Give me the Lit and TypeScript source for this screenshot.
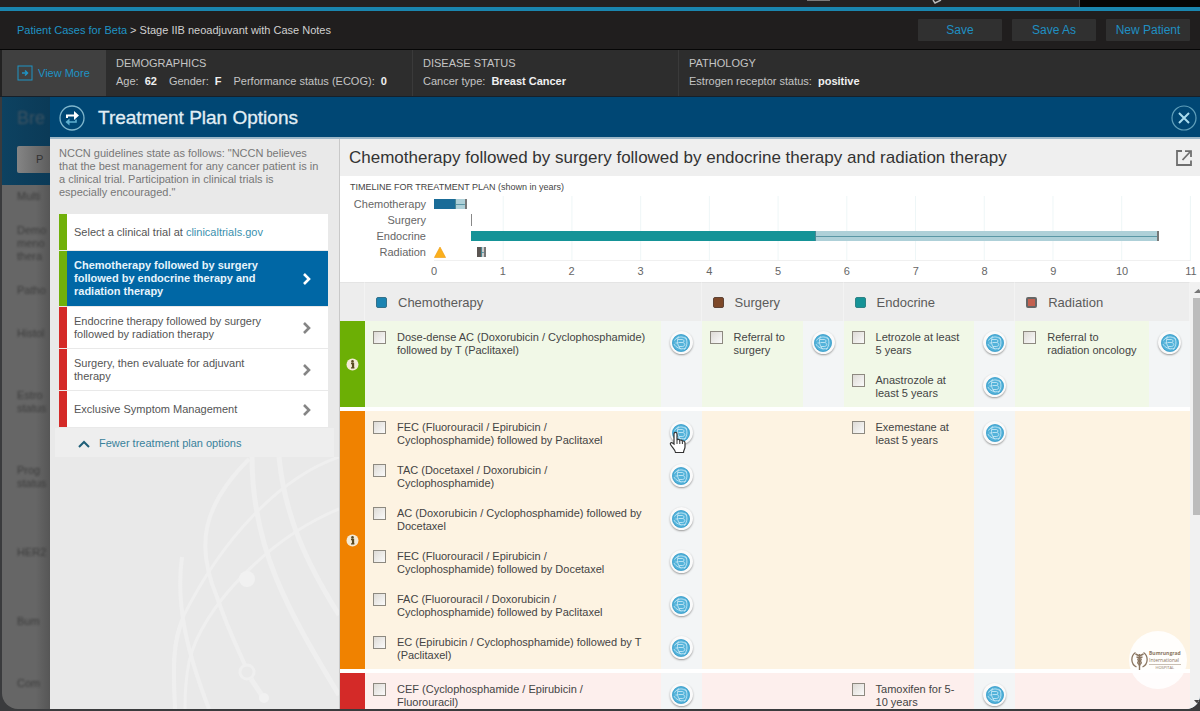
import { LitElement, html, svg, css, nothing } from "lit";
import { customElement, state } from "lit/decorators.js";
import { classMap } from "lit/directives/class-map.js";
import { styleMap } from "lit/directives/style-map.js";

type Level = "green" | "orange" | "red";

interface PlanOption {
  level: Level;
  text: string;
}

interface TimelineRow {
  name: string;
  tone: string;
  start: number;
  sure: number;
  max: number;
  warn?: boolean;
}

interface Therapy {
  name: string;
  hovered?: boolean;
}

interface Band {
  level: Level;
  cells: Therapy[][];
}

const YEARS = 11;

const OPTIONS: PlanOption[] = [
  { level: "green", text: "Chemotherapy followed by surgery followed by endocrine therapy and radiation therapy" },
  { level: "red", text: "Endocrine therapy followed by surgery followed by radiation therapy" },
  { level: "red", text: "Surgery, then evaluate for adjuvant therapy" },
  { level: "red", text: "Exclusive Symptom Management" },
];

const TIMELINE: TimelineRow[] = [
  { name: "Chemotherapy", tone: "chemo", start: 0, sure: 0.31, max: 0.48 },
  { name: "Surgery", tone: "surgery", start: 0.54, sure: 0, max: 0.54 },
  { name: "Endocrine", tone: "endocrine", start: 0.54, sure: 5.54, max: 10.55 },
  { name: "Radiation", tone: "radiation", start: 0.62, sure: 0.68, max: 0.75, warn: true },
];

const COLUMNS = [
  { name: "Chemotherapy", tone: "chemo" },
  { name: "Surgery", tone: "surgery" },
  { name: "Endocrine", tone: "endocrine" },
  { name: "Radiation", tone: "radiation" },
];

const BANDS: Band[] = [
  {
    level: "green",
    cells: [
      [{ name: "Dose-dense AC (Doxorubicin / Cyclophosphamide)\nfollowed by T (Paclitaxel)" }],
      [{ name: "Referral to\nsurgery" }],
      [{ name: "Letrozole at least\n5 years" }, { name: "Anastrozole at\nleast 5 years" }],
      [{ name: "Referral to\nradiation oncology" }],
    ],
  },
  {
    level: "orange",
    cells: [
      [
        { name: "FEC (Fluorouracil / Epirubicin /\nCyclophosphamide) followed by Paclitaxel", hovered: true },
        { name: "TAC (Docetaxel / Doxorubicin /\nCyclophosphamide)" },
        { name: "AC (Doxorubicin / Cyclophosphamide) followed by\nDocetaxel" },
        { name: "FEC (Fluorouracil / Epirubicin /\nCyclophosphamide) followed by Docetaxel" },
        { name: "FAC (Fluorouracil / Doxorubicin /\nCyclophosphamide) followed by Paclitaxel" },
        { name: "EC (Epirubicin / Cyclophosphamide) followed by T\n(Paclitaxel)" },
      ],
      [],
      [{ name: "Exemestane at\nleast 5 years" }],
      [],
    ],
  },
  {
    level: "red",
    cells: [
      [{ name: "CEF (Cyclophosphamide / Epirubicin /\nFluorouracil)" }],
      [],
      [{ name: "Tamoxifen for 5-\n10 years" }],
      [],
    ],
  },
];

const chevron = svg`<path d="M2 1 L7 6 L2 11" fill="none" stroke="currentColor" stroke-width="2.6"/>`;

@customElement("patient-header")
class PatientHeader extends LitElement {
  static styles = css`
    :host { display: block; color: #c4c4c4; font-size: 11px; }
    .strip {
      height: 7px; display: flex; background: #242222; border-bottom: 4px solid #1a86af;
    }
    .strip svg { flex: 1; height: 7px; }
    .strip .rest { width: 10%; background: #060606; border-left: 1px solid #444; }
    .crumbs {
      height: 38px; display: flex; align-items: center; padding: 0 10px 0 17px; gap: 10px;
      background: #201e1e; border-bottom: 1px solid #060606;
    }
    .trail { flex: 1; font-size: 11px; color: #d0d0d0; }
    .trail a, .more { color: #1f93c4; text-decoration: none; }
    .save {
      width: 84px; height: 22px; border: 0; padding: 0; background: #303030; color: #1f8fc2;
      font: 12px "Liberation Sans", Arial, sans-serif; border-radius: 1px;
    }
    .facts {
      display: grid; grid-template-columns: 106px 307fr 266fr 521fr; height: 46px; background: #2d2d2d;
      border-bottom: 1px solid #16202a;
    }
    .more {
      display: flex; align-items: center; gap: 5px; background: #404040; border: 0;
      border-left: 2px solid #222; padding: 0 0 0 15px; font: 11px "Liberation Sans", Arial, sans-serif;
    }
    .fact { padding: 4px 0 0 10px; line-height: 18px; border-right: 1px solid #3a3a3a; white-space: nowrap; }
    .fact:last-child { border-right: 0; }
    .fact h2 { margin: 0; font-size: 11px; font-weight: normal; }
    .pairs { display: flex; gap: 12px; }
    .pairs b { color: #f0f0f0; padding-left: 3px; }
  `;

  render() {
    return html`
      <div class="strip">
        <svg viewBox="0 0 1080 7" preserveAspectRatio="xMinYMin slice" aria-hidden="true">
          <path d="M807 0H830" stroke="#999" stroke-width="1.5" />
          <path d="M933 0L935 3L941 0" fill="none" stroke="#bbb" stroke-width="1.4" />
        </svg>
        <div class="rest"></div>
      </div>
      <div class="crumbs">
        <nav class="trail"><a href="#">Patient Cases for Beta</a> &gt; Stage IIB neoadjuvant with Case Notes</nav>
        <button class="save">Save</button>
        <button class="save">Save As</button>
        <button class="save">New Patient</button>
      </div>
      <div class="facts">
        <button class="more">
          <svg width="16" height="16" viewBox="0 0 16 16" aria-hidden="true">
            <rect x="1" y="1" width="14" height="14" fill="none" stroke="currentColor" />
            <path d="M5 8H10M8 5.5L10.5 8L8 10.5" fill="none" stroke="currentColor" stroke-width="1.5" />
          </svg>
          View More
        </button>
        <div class="fact">
          <h2>DEMOGRAPHICS</h2>
          <div class="pairs">
            <span>Age: <b>62</b></span><span>Gender: <b>F</b></span><span>Performance status (ECOG): <b>0</b></span>
          </div>
        </div>
        <div class="fact">
          <h2>DISEASE STATUS</h2>
          <div class="pairs"><span>Cancer type: <b>Breast Cancer</b></span></div>
        </div>
        <div class="fact">
          <h2>PATHOLOGY</h2>
          <div class="pairs"><span>Estrogen receptor status: <b>positive</b></span></div>
        </div>
      </div>
    `;
  }
}

@customElement("plan-sidebar")
class PlanSidebar extends LitElement {
  @state() private selected = 0;

  static styles = css`
    :host {
      display: flex; flex-direction: column; background: #e9e9e9; color: #555; font-size: 11px; line-height: 13px;
      border-right: 1px solid #c9c9c9; box-sizing: border-box; min-height: 0;
    }
    .intro { margin: 0; padding: 8px 18px 15px 9px; color: #777; }
    .list { list-style: none; margin: 0; padding: 0 11px 0 9px; display: grid; gap: 1px; }
    .row {
      display: flex; align-items: center; width: 100%; min-height: 36px; box-sizing: border-box; margin: 0;
      padding: 8px 15px 7px 7px; border: 0; border-left: 8px solid #d42a28; background: #fff; color: #555;
      font: 11px/13px "Liberation Sans", Arial, sans-serif; text-align: left; gap: 20px;
    }
    .green { border-left-color: #70b00a; }
    .row.on { background: #0067a5; color: #e6f4fc; font-weight: bold; padding-bottom: 8px; }
    .row span { flex: 1; }
    .row svg { color: #858585; flex: none; }
    .row.on svg { color: #fff; }
    a { color: #3a8fae; text-decoration: none; }
    .fewer {
      display: flex; align-items: center; gap: 9px; margin: 1px 5px 0; padding: 9px 0 7px 23px; background: #eeeeee;
      color: #39829c;
    }
    .art { flex: 1; min-height: 0; display: flex; justify-content: flex-end; overflow: hidden; }
    .art svg { width: 178px; height: 252px; flex: none; }
  `;

  render() {
    return html`
      <p class="intro">
        NCCN guidelines state as follows: "NCCN believes that the best management for any cancer patient is in a
        clinical trial. Participation in clinical trials is especially encouraged."
      </p>
      <ul class="list">
        <li><div class="row green"><span>Select a clinical trial at <a href="#">clinicaltrials.gov</a></span></div></li>
        ${OPTIONS.map(
          (o, i) => html`<li>
            <button
              class=${classMap({ row: true, green: o.level === "green", on: i === this.selected })}
              @click=${() => (this.selected = i)}
            >
              <span>${o.text}</span>
              <svg width="11" height="12" viewBox="0 0 11 12" aria-hidden="true">${chevron}</svg>
            </button>
          </li>`,
        )}
      </ul>
      <a class="fewer" href="#">
        <svg width="12" height="8" viewBox="0 0 12 8" aria-hidden="true">
          <path d="M1 7L6 2L11 7" fill="none" stroke="#1f5f78" stroke-width="2" />
        </svg>
        Fewer treatment plan options
      </a>
      <div class="art">
        <svg viewBox="0 0 178 252" aria-hidden="true" fill="none" stroke="#efefef" stroke-width="5">
          <path d="M91 0C91 90 125 150 178 238" />
          <path d="M118 0C124 60 145 105 178 158" />
          <path d="M88 2C40 50 35 90 56 140C66 170 76 190 84 208" stroke-width="4" />
          <path d="M178 0C120 20 62 80 22 160C10 185 12 220 14 252" stroke-width="3" />
          <path d="M178 52C110 80 40 150 28 205C24 225 24 240 24 252" stroke-width="3" />
          <path d="M21 100C14 150 28 200 48 252" stroke-width="4" />
          <path d="M22 162C10 190 13 220 14 252" stroke-width="4" />
          <circle cx="86" cy="122" r="8" fill="#f1f1f1" stroke="none" />
          <circle cx="86" cy="215" r="7" stroke-width="3" />
          <path d="M90 222L102 240" />
          <circle cx="103" cy="241" r="5" fill="#f1f1f1" stroke="none" />
        </svg>
      </div>
    `;
  }
}

@customElement("plan-timeline")
class PlanTimeline extends LitElement {
  static styles = css`
    :host { display: block; background: #fff; color: #666; padding: 4px 9px 0 10px; height: 102px; }
    h3 { margin: 0; font-size: 9px; line-height: 14px; font-weight: normal; color: #444; }
    .chart { display: grid; grid-template-columns: 76px 1fr; column-gap: 8px; margin-top: 2px; }
    .names { display: grid; grid-auto-rows: 16px; font-size: 11px; line-height: 16px; text-align: right; }
    .plot {
      border-bottom: 1px solid #f0f0f0; display: grid; grid-auto-rows: 16px;
      background-image: linear-gradient(to right, #eef6f7 1px, transparent 1px);
      background-size: calc(100% / 11) 100%;
      border-right: 1px solid #eef6f7;
    }
    .track { display: flex; align-items: center; background-image: linear-gradient(to right, #fff 1px, transparent 1px); }
    .sure { height: 10px; flex: none; }
    .range {
      height: 10px; flex: none; box-sizing: border-box; background: linear-gradient(#5a97a5, #5a97a5) center / 100% 1px no-repeat #aed0d8;
      border-right: 2px solid #777; border-left: 1px solid #4a8794;
    }
    .surgery .range { height: 12px; width: 1px; border-left: 0; border-right: 1px solid #888; background: none; }
    .radiation .range { background-color: #ccc; }
    .chemo .sure { background: #1a6c98; }
    .endocrine .sure { background: #159397; }
    .radiation .sure { background: #5b5552; }
    .warn { width: 12px; height: 12px; flex: none; margin-right: -12px; }
    .ticks { grid-column: 2; display: flex; justify-content: space-between; font-size: 11px; line-height: 20px; }
    .ticks span { width: 0; display: flex; justify-content: center; }
  `;

  private bar(r: TimelineRow) {
    const pct = (v: number) => `${(v / YEARS) * 100}%`;
    return html`<div class="track ${r.tone}">
      ${r.warn
        ? html`<svg class="warn" viewBox="0 0 12 12" aria-hidden="true"><path d="M6 1L11.6 11.5H0.4Z" fill="#fbb01c" stroke="#ee9a10" stroke-width=".6" /></svg>`
        : nothing}
      <div class="sure" style=${styleMap({ marginLeft: pct(r.start), width: pct(Math.max(0, r.sure - r.start)) })}></div>
      <div class="range" style=${styleMap(r.sure ? { width: pct(r.max - r.sure) } : {})}></div>
    </div>`;
  }

  render() {
    return html`
      <h3>TIMELINE FOR TREATMENT PLAN (shown in years)</h3>
      <div class="chart">
        <div class="names">${TIMELINE.map((r) => html`<span>${r.name}</span>`)}</div>
        <div class="plot">${TIMELINE.map((r) => this.bar(r))}</div>
        <div class="ticks">${Array.from({ length: YEARS + 1 }, (_, i) => html`<span>${i}</span>`)}</div>
      </div>
    `;
  }
}

@customElement("therapy-table")
class TherapyTable extends LitElement {
  static styles = css`
    :host { display: flex; flex: 1; min-height: 0; overflow: hidden; background: #f1f1f1; color: #444; }
    table { flex: 1; width: 100%; table-layout: fixed; border-collapse: separate; border-spacing: 0; align-self: flex-start; }
    .c-info { width: 25px; }
    .c-0 { width: 39.6%; }
    .c-1 { width: 16.7%; }
    .c-2 { width: 20.2%; }
    th {
      height: 39px; padding: 0 0 0 11px; box-sizing: border-box; background: #ededed; text-align: left;
      font-size: 13px; font-weight: normal; color: #5b5b5b; border-right: 1px solid #f3f3f3; border-top: 1px solid #e4e4e4;
    }
    .head { display: flex; align-items: center; gap: 11px; }
    .swatch { width: 11px; height: 11px; border-radius: 2px; border: 1px solid #35718a; box-sizing: border-box; }
    .chemo { background: #1b84b2; }
    .surgery { background: #7d4829; border-color: #5f4436; }
    .endocrine { background: #159397; border-color: #2f8386; }
    .radiation { background: #c3604f; border: 2px solid #666; }
    td { padding: 0; vertical-align: top; border-bottom: 4px solid #fff; height: 43px; }
    .green td { background-color: #f1f8e7; }
    .orange td { background-color: #fdf3e2; }
    .red td { background-color: #fdefed; height: 120px; }
    .filled { background-image: linear-gradient(to left, #f3f5f6 41px, transparent 41px); }
    td.level { vertical-align: middle; text-align: center; }
    .green td.level { background: #6caf05; }
    .orange td.level { background: #f08200; }
    .red td.level { background: #d42a28; }
    .info { border: 0; padding: 0; background: none; display: block; margin: 0 auto; width: 13px; height: 13px; }
    .info svg, .detail svg { display: block; }
    .item { display: grid; grid-template-columns: 1fr 41px; height: 43px; box-sizing: border-box; padding-top: 10px; }
    .pick { display: flex; gap: 11px; padding: 0 0 0 8px; font-size: 11px; line-height: 13px; align-items: flex-start; }
    .pick span { white-space: pre-line; }
    .pick input {
      appearance: none; box-sizing: border-box; width: 13px; height: 13px; margin: 0; flex: none;
      border: 1px solid #8d8980; background: linear-gradient(135deg, #dedbd6, #fafafa);
    }
    .pick input:checked { background: #1b84b2; }
    .detail {
      position: relative; width: 23px; height: 23px; padding: 0; border: 0; border-radius: 50%; background: #fafafa;
      justify-self: center; box-shadow: 0 1px 2px #9a9a9a; display: grid; place-items: center;
    }
    .hand { position: absolute; left: -1px; top: 10px; }
    .scroll {
      width: 10px; box-sizing: border-box; padding: 6px 0 0 3px; background: #f1f1f1; display: flex;
      flex-direction: column; gap: 5px;
    }
    .thumb { height: 217px; background: #bcbcbc; }
    .scroll svg { display: block; }
    .down { margin-top: auto; margin-bottom: 1px; }
  `;

  private therapy(t: Therapy) {
    return html`<div class="item">
      <label class="pick"><input type="checkbox" /><span>${t.name}</span></label>
      <button class="detail" aria-label="Details">
        <svg width="18" height="18" viewBox="0 0 18 18" aria-hidden="true">
          <circle cx="9" cy="9" r="8.8" fill="#54b3da" />
          <g fill="none" stroke="#c4e7f5" stroke-width="0.9">
            <path d="M2.500 6.500C5 2.500 11 1.500 15 5.500" />
            <path d="M6.500 2.500C4.500 7 5.500 12 9 15.500" />
            <path d="M6 5.500H10.500C12.500 6 12.500 8 10.500 8.500H6.500" />
            <path d="M10.500 8.500C13.500 9 13.500 12 10.500 12.500H7" />
            <path d="M1.800 10C4 13.500 8 15.500 13.500 14.500" />
            <path d="M13.500 3.500C15.500 7 15.500 11 12.500 15.500" />
            <path d="M3.500 9H6" />
          </g>
          <circle cx="9" cy="9" r="8.4" fill="none" stroke="#3a9cc8" stroke-width=".8" />
        </svg>
        ${t.hovered
          ? html`<svg class="hand" width="18" height="23" viewBox="0 0 18 23" aria-hidden="true">
              <path
                d="M5 13V3C5 .8 8 .8 8 3V9C8.500 8 10.600 8.200 10.800 9.500C11.500 8.600 13.200 9 13.400 10.300C14.500 9.600 16 10.200 16 12V16C16 18 14.500 19 14.500 21.500H6.500C6 18.500 3.500 17 1.500 13.500C.8 12 2.500 11 3.600 12Z"
                fill="#fff" stroke="#333" stroke-width="1.2" />
              <path d="M8 9V13M10.800 10V13M13.400 11V13" stroke="#333" stroke-width="1" />
            </svg>`
          : nothing}
      </button>
    </div>`;
  }

  render() {
    return html`
      <table>
        <colgroup><col class="c-info" /><col class="c-0" /><col class="c-1" /><col class="c-2" /><col /></colgroup>
        <thead>
          <tr>
            <th></th>
            ${COLUMNS.map((c) => html`<th scope="col"><div class="head"><i class="swatch ${c.tone}"></i>${c.name}</div></th>`)}
          </tr>
        </thead>
        <tbody>
          ${BANDS.map(
            (b) => html`<tr class=${b.level}>
              <td class="level">
                <button class="info" aria-label="Information">
                  <svg width="13" height="13" viewBox="0 0 13 13" aria-hidden="true">
                    <circle cx="6.500" cy="6.500" r="6" fill="#f4ead6" />
                    <circle cx="6.500" cy="3.400" r="1.300" fill="#5a4a22" />
                    <path d="M5 5.500H7.500V9.600H8.400M5 9.900H8.400M6.600 5.500V10" stroke="#5a4a22" stroke-width="1.300" fill="none" />
                  </svg>
                </button>
              </td>
              ${b.cells.map((c) => html`<td class=${classMap({ filled: c.length > 0 })}>${c.map((t) => this.therapy(t))}</td>`)}
            </tr>`,
          )}
        </tbody>
      </table>
      <div class="scroll" aria-hidden="true">
        <svg width="7" height="5" viewBox="0 0 7 5"><path d="M1 5L5.500 1L7 2.500V5Z" fill="#777" /></svg>
        <div class="thumb"></div>
        <svg class="down" width="7" height="8" viewBox="0 0 7 8"><path d="M1 0H7V4.500L5 4.500Z" fill="#444" /></svg>
      </div>
    `;
  }
}

@customElement("hospital-badge")
class HospitalBadge extends LitElement {
  static styles = css`
    :host {
      width: 58px; height: 58px; border-radius: 50%; background: rgba(255, 255, 255, 0.88); display: flex;
      align-items: center; gap: 1px; color: #8a7560; box-sizing: border-box; padding-left: 2px;
    }
    svg { flex: none; }
    .name { font: 5px/7px "Open Sans", sans-serif; display: flex; flex-direction: column; }
    b { font-weight: 700; }
    small { font-size: 4px; line-height: 6px; border-top: 1px solid #c9bfb3; text-align: center; }
  `;

  render() {
    return html`
      <svg width="17" height="21" viewBox="0 0 17 21" fill="none" stroke="#8a7560" aria-hidden="true">
        <path d="M4.500 2.500C-.5 6 -.5 14 5.500 17M12.500 2.500C17.500 6 17.500 14 11.500 17" stroke-width="1.300" />
        <path d="M8.500 4V20" stroke-width="1.400" />
        <path d="M4.500 4L8.500 6L12.500 4M5.500 7C11 8 11 10 8.500 11C6 12 6 14 9.500 15M11.500 7C6 8 6 10 8.500 11C11 12 11 14 7.500 15" stroke-width="1.500" />
      </svg>
      <div class="name"><b>Bumrungrad</b><span>International</span><small>HOSPITAL</small></div>
    `;
  }
}

@customElement("app-root")
class AppRoot extends LitElement {
  static styles = css`
    :host {
      display: flex; flex-direction: column; height: 100vh; position: relative; overflow: hidden; background: #3a3b3d;
      font-family: "Liberation Sans", Arial, sans-serif;
    }
    .stage {
      flex: 1; min-height: 0; display: flex; margin: 0 0 2px 2px; border-radius: 0 0 14px 16px; overflow: hidden;
    }
    .under {
      width: 48px; overflow: hidden; background: linear-gradient(to right, #666 70%, #565656); color: #3c3c3c;
      font-size: 11px; line-height: 13px; white-space: nowrap;
    }
    .under-top {
      height: 88px; box-sizing: border-box; padding: 9px 0 0 15px; background: linear-gradient(to right, #0d4261, #0b3a57);
      color: #3c5362; font-size: 18px; line-height: 24px;
    }
    .under-tab {
      height: 27px; margin-top: 16px; border-radius: 2px 0 0 2px; background: linear-gradient(to right, #858585, #5d5d5d);
      font-size: 11px; line-height: 27px; color: #333; padding-left: 19px;
    }
    .blur { filter: blur(1px); }
    .note { margin: 0; padding-left: 15px; }
    .near { padding-top: 21px; }
    .mid { padding-top: 30px; }
    .far { padding-top: 49px; }
    .wide { padding-top: 56px; }
    .first { padding-top: 5px; }
    .modal { flex: 1; min-width: 0; display: flex; flex-direction: column; background: #004774; padding-top: 1px; }
    .bar {
      display: flex; align-items: center; height: 38px; padding: 1px 3px 0 9px; gap: 13px; background: #004774;
      border-bottom: 2px solid #9db8c8; color: #e2eef5;
    }
    h1 { flex: 1; margin: 0; font-size: 19px; font-weight: normal; line-height: 24px; -webkit-text-stroke: 0.3px; }
    .icon { border: 0; padding: 0; background: none; display: block; }
    .icon svg, .bar > svg { display: block; }
    .body { flex: 1; min-height: 0; display: grid; grid-template-columns: 290px 1fr; grid-template-rows: 100%; }
    .main { display: flex; flex-direction: column; min-width: 0; min-height: 0; }
    .title {
      display: flex; align-items: center; justify-content: space-between; height: 37px; flex: none;
      padding: 0 8px 0 9px; background: #efefef;
    }
    h2 { margin: 0; font-size: 17px; font-weight: normal; color: #333; }
    .badge { position: absolute; right: 13px; bottom: 22px; }
  `;

  render() {
    return html`
      <patient-header></patient-header>
      <div class="stage">
        <div class="under" aria-hidden="true">
          <div class="under-top"><div class="blur">Bre</div><div class="under-tab">P</div></div>
          <div class="blur">
            <p class="note first">Multi</p>
            <p class="note near">Demo<br />meno<br />thera</p>
            <p class="note near">Patho</p>
            <p class="note mid">Histol</p>
            <p class="note far">Estro<br />status</p>
            <p class="note far">Prog<br />status</p>
            <p class="note wide">HER2</p>
            <p class="note wide">Bum</p>
            <p class="note far">Com</p>
          </div>
        </div>
        <div class="modal">
          <div class="bar">
            <svg width="26" height="26" viewBox="0 0 26 26" fill="none" aria-hidden="true">
              <circle cx="13" cy="13" r="12" stroke="#7fb6cc" stroke-width="1.300" />
              <path d="M8 13V10.500H17" stroke="#fff" stroke-width="2" />
              <path d="M15 6L20 10.500L15 15Z" fill="#fff" />
              <path d="M17 14.500V17H10" stroke="#5fb0cf" stroke-width="1.600" />
              <path d="M10.500 13.500L6.500 17L10.500 20.500Z" fill="#5fb0cf" />
            </svg>
            <h1>Treatment Plan Options</h1>
            <button class="icon" aria-label="Close">
              <svg width="26" height="26" viewBox="0 0 26 26" fill="none" aria-hidden="true">
                <circle cx="13" cy="13" r="12" stroke="#5f9fba" stroke-width="1.200" />
                <path d="M8 8L18 18M18 8L8 18" stroke="#a9dcee" stroke-width="2" />
              </svg>
            </button>
          </div>
          <div class="body">
            <plan-sidebar></plan-sidebar>
            <div class="main">
              <div class="title">
                <h2>Chemotherapy followed by surgery followed by endocrine therapy and radiation therapy</h2>
                <button class="icon" aria-label="Open in new window">
                  <svg width="16" height="16" viewBox="0 0 16 16" fill="none" stroke="#6e6e6e" stroke-width="1.800" aria-hidden="true">
                    <path d="M6 1H1V15H15V10.500" />
                    <path d="M6.500 10L14 2" />
                    <path d="M9 1.200H15V7" />
                  </svg>
                </button>
              </div>
              <plan-timeline></plan-timeline>
              <therapy-table></therapy-table>
            </div>
          </div>
        </div>
      </div>
      <hospital-badge class="badge"></hospital-badge>
    `;
  }
}
